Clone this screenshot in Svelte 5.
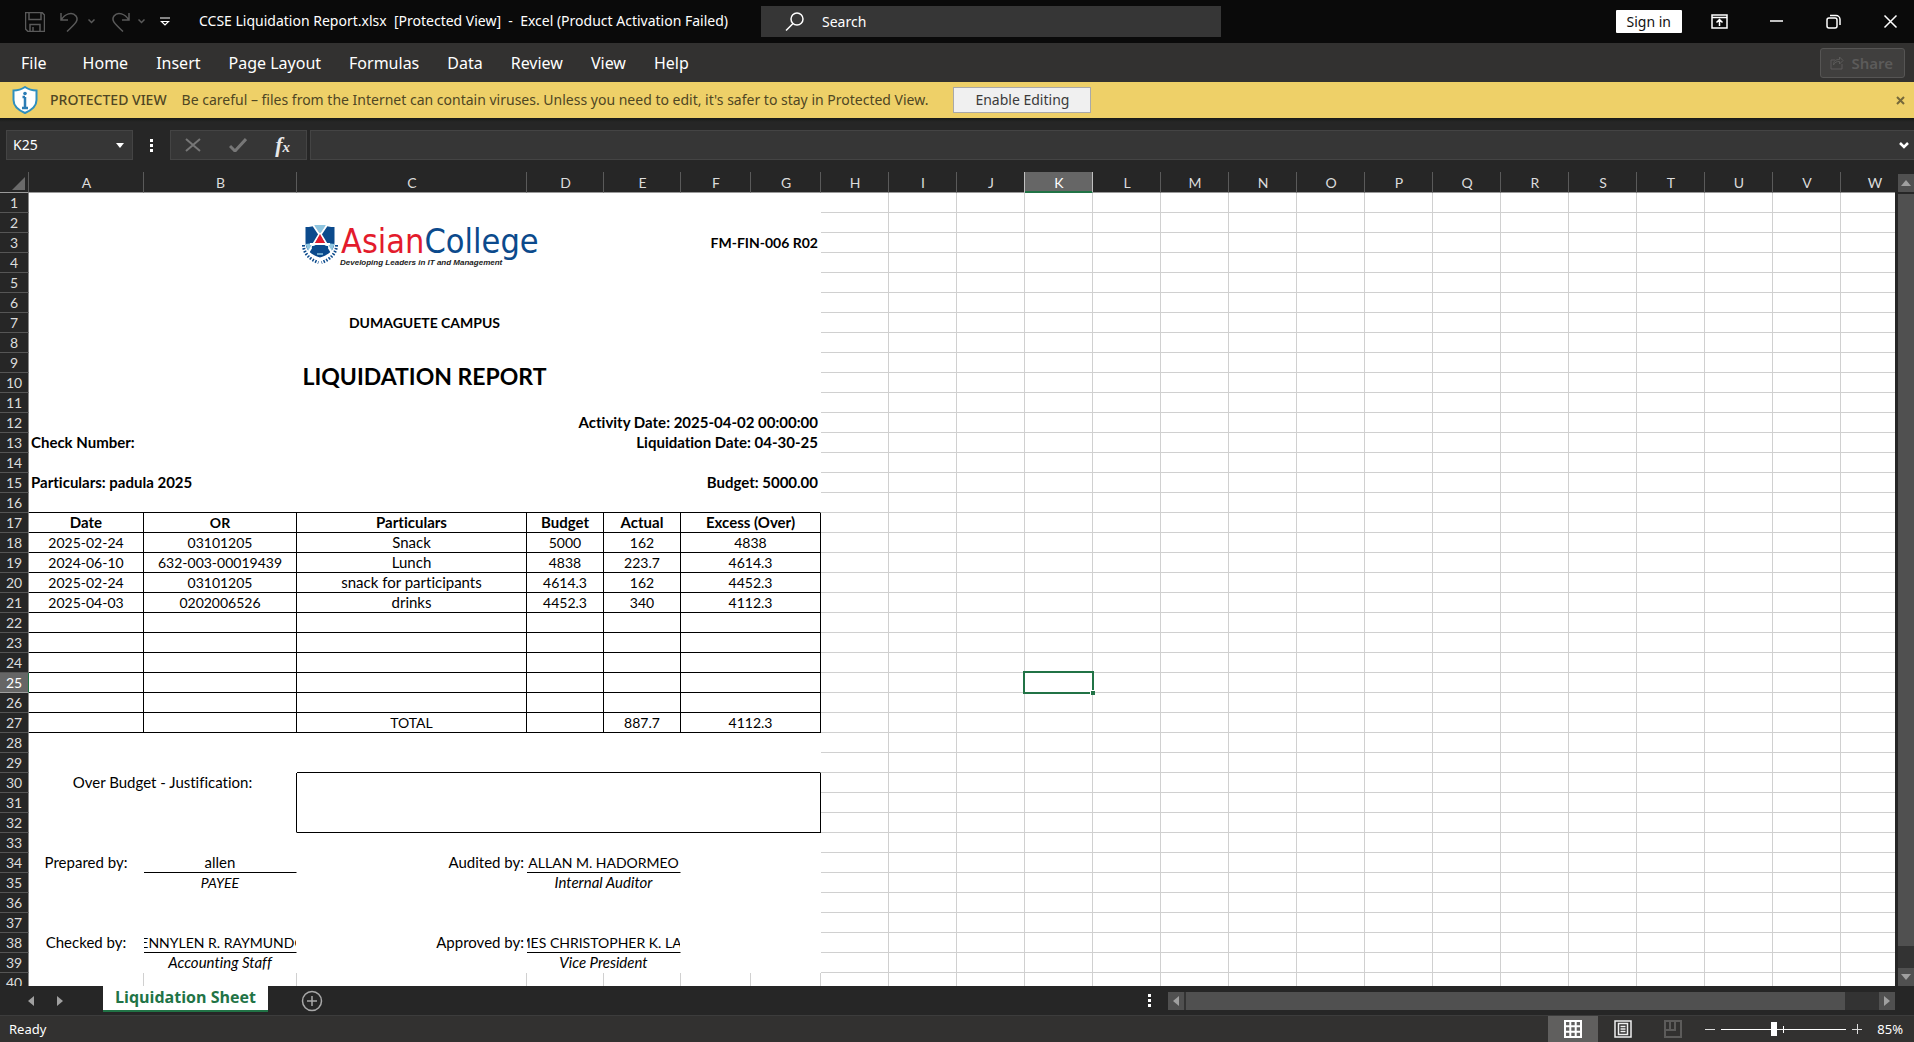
<script>
  const menus = ['Home', 'Insert', 'Page Layout', 'Formulas', 'Data', 'Review', 'View', 'Help'];
  const columns = 'ABCDEFGHIJKLMNOPQRSTUVW'.split('');
  const gridColumns = columns.slice(7);
  const tableHead = ['Date', 'OR', 'Particulars', 'Budget', 'Actual', 'Excess (Over)'];
  const entries = [
    ['2025-02-24', '03101205', 'Snack', '5000', '162', '4838'],
    ['2024-06-10', '632-003-00019439', 'Lunch', '4838', '223.7', '4614.3'],
    ['2025-02-24', '03101205', 'snack for participants', '4614.3', '162', '4452.3'],
    ['2025-04-03', '0202006526', 'drinks', '4452.3', '340', '4112.3'],
    ['', '', '', '', '', ''],
    ['', '', '', '', '', ''],
    ['', '', '', '', '', ''],
    ['', '', '', '', '', ''],
    ['', '', '', '', '', ''],
    ['', '', 'TOTAL', '', '887.7', '4112.3']
  ];

  // Wording in mixed case is set one size up from figures and capitals.
  const cell = (text = '', cls = '', span = 1, rows = 1) => ({
    text, span, rows, cls: /[a-z]/.test(text) ? cls + ' wording' : cls
  });
  const blank = () => [cell('', '', 7)];
  const boxed = (values, cls) => values.map((v, i) => cell(v, cls, i === 5 ? 2 : 1));
  const signers = (a, nameA, b, nameB) => [
    cell(a, 'center'), cell(nameA, 'center under clip'), cell(b, 'right'),
    cell(nameB, 'center under clip', 2), cell('', '', 2)
  ];
  const roles = (a, b) => [
    cell(), cell(a, 'center italic'), cell(), cell(b, 'center italic', 2), cell('', '', 2)
  ];

  // Cells of columns A to G for each numbered row; H onward is empty grid.
  const rows = [
    blank(),
    [cell('', '', 2), cell('', 'logo', 5)],
    [cell('FM-FIN-006 R02', 'bold right', 7)],
    blank(), blank(), blank(),
    [cell('DUMAGUETE CAMPUS', 'bold center', 7)],
    blank(),
    [cell('LIQUIDATION REPORT', 'heading', 7, 2)],
    [],
    blank(),
    [cell('Activity Date: 2025-04-02 00:00:00', 'bold right', 7)],
    [cell('Check Number:', 'bold', 2), cell('Liquidation Date: 04-30-25', 'bold right', 5)],
    blank(),
    [cell('Particulars: padula 2025', 'bold', 2), cell('Budget: 5000.00', 'bold right', 5)],
    [cell('', 'under', 7)],
    boxed(tableHead, 'box center bold'),
    ...entries.map((e) => boxed(e, 'box center')),
    blank(),
    [cell('', '', 2), cell('', 'under', 5)],
    [cell('Over Budget - Justification:', 'center top side', 2, 3), cell('', 'box', 5, 3)],
    [], [],
    blank(),
    signers('Prepared by:', 'allen', 'Audited by:', 'ALLAN M. HADORMEO'),
    roles('PAYEE', 'Internal Auditor'),
    blank(), blank(),
    signers('Checked by:', 'JENNYLEN R. RAYMUNDO', 'Approved by:', 'MES CHRISTOPHER K. LAY'),
    roles('Accounting Staff', 'Vice President'),
    Array.from({ length: 7 }, () => cell('', 'grid'))
  ];

  let zoom = $state(42);
</script>

<div class="app">
  <header class="titlebar">
    <div class="quick">
      <button aria-label="Save"><svg width="20" height="20" viewBox="0 0 20 20"><path d="M.5.5H17l2.500 2.500v16.500H3L.5 17zM4 .5v7h12v-7M5 19.500v-7h10v7M8 15v4" /></svg></button>
      <button class="pair" aria-label="Undo">
        <svg width="20" height="20" viewBox="0 0 20 20"><path d="M1 1v7h7M1 8C5 2 12-1 16 4c3 4 0 7-9 15.500" /></svg>
        <svg width="7" height="5" viewBox="0 0 7 5"><path d="M.5.5l3 3 3-3" /></svg>
      </button>
      <button class="pair" aria-label="Redo">
        <svg width="20" height="20" viewBox="0 0 20 20"><path d="M19 1v7h-7M19 8C15 2 8-1 4 4c-3 4 0 7 9 15.500" /></svg>
        <svg width="7" height="5" viewBox="0 0 7 5"><path d="M.5.5l3 3 3-3" /></svg>
      </button>
      <button class="lit" aria-label="Customize Quick Access Toolbar"><svg width="10" height="10" viewBox="0 0 10 10"><path d="M0 1h10M1.500 4.500L5 8l3.500-3.500z" /></svg></button>
      <h1>CCSE Liquidation Report.xlsx&nbsp; [Protected View]&nbsp; -&nbsp; Excel (Product Activation Failed)</h1>
    </div>
    <label class="search">
      <svg width="19" height="19" viewBox="0 0 19 19"><circle cx="12" cy="7" r="6" /><path d="M8 11.500L1 18.500" /></svg>
      <input type="search" aria-label="Search" placeholder="Search" />
    </label>
    <div class="window">
      <button class="signin">Sign in</button>
      <button aria-label="Ribbon Display Options"><svg width="17" height="15" viewBox="0 0 17 15"><path d="M1 1h15v13H1zM1 3.500h15M8.500 12V6M5.500 8.500l3-3 3 3" /></svg></button>
      <button aria-label="Minimize"><svg width="17" height="15" viewBox="0 0 17 15"><path d="M2 7h13" /></svg></button>
      <button aria-label="Restore"><svg width="17" height="15" viewBox="0 0 17 15"><rect x="2" y="4" width="10" height="10" rx="2" /><path d="M5 1.500h6a4 4 0 0 1 4 4V11" /></svg></button>
      <button aria-label="Close"><svg width="17" height="15" viewBox="0 0 17 15"><path d="M2.500 1.500l12 12M14.500 1.500l-12 12" /></svg></button>
    </div>
  </header>

  <nav class="menu">
    <button class="file">File</button>
    {#each menus as m}<button>{m}</button>{/each}
    <button class="share" disabled>
      <svg width="14" height="15" viewBox="0 0 14 15"><path d="M5 5H1v9h11V9M3.500 10c0-4 2-5.500 6-5.500V2l3.500 3.500L9.500 9V6.500c-3 0-4.500.5-6 3.500z" /></svg>
      Share
    </button>
  </nav>

  <section class="notice">
    <svg class="shield" width="26" height="28" viewBox="0 0 26 28"><path d="M13 1c4 2.800 7 3.500 11.500 3.500V14c0 6-4.500 10-11.500 13C6 24 1.500 20 1.500 14V4.500C6 4.500 9 3.800 13 1z" fill="#fff" stroke="#2f8fbf" stroke-width="2" /><path d="M13 11v11M10.500 11H13M10 22h6" stroke="#2b7cb5" stroke-width="2.500" fill="none" /><circle cx="13" cy="7.500" r="1.800" fill="#2b7cb5" /></svg>
    <strong>PROTECTED VIEW</strong>
    <span>Be careful – files from the Internet can contain viruses. Unless you need to edit, it's safer to stay in Protected View.</span>
    <button class="enable">Enable Editing</button>
    <button class="dismiss" aria-label="Close message"><svg width="9" height="9" viewBox="0 0 9 9"><path d="M1 1l7 7M8 1L1 8" /></svg></button>
  </section>

  <section class="formula">
    <div class="namebox">
      <input aria-label="Name Box" value="K25" />
      <button aria-label="Open names"><svg width="8" height="5" viewBox="0 0 8 5"><path d="M0 0h8L4 5z" fill="#fff" /></svg></button>
    </div>
    <span class="dots"><i></i><i></i><i></i></span>
    <div class="tools">
      <button aria-label="Cancel"><svg width="16" height="14" viewBox="0 0 16 14"><path d="M1 1l14 12M15 1L1 13" stroke="#777" stroke-width="2" /></svg></button>
      <button aria-label="Enter"><svg width="18" height="14" viewBox="0 0 18 14"><path d="M1 8l5 5L17 1" stroke="#777" stroke-width="3" fill="none" /></svg></button>
      <button class="fx" aria-label="Insert Function">f<sub>x</sub></button>
    </div>
    <div class="entry">
      <input aria-label="Formula Bar" />
      <button aria-label="Expand Formula Bar"><svg width="10" height="7" viewBox="0 0 10 7"><path d="M1 1l4 4 4-4" stroke="#fff" stroke-width="2.500" fill="none" /></svg></button>
    </div>
  </section>

  <main class="work">
    <div class="sheet">
      <table>
        <colgroup>
          <col class="w-head" /><col class="w-a" /><col class="w-b" /><col class="w-c" />
          <col class="w-d" /><col class="w-d" /><col class="w-f" /><col class="w-f" />
          {#each gridColumns as c (c)}<col class="w-grid" />{/each}
        </colgroup>
        <thead>
          <tr>
            <th class="corner"><svg width="13" height="13" viewBox="0 0 13 13"><path d="M13 0v13H0z" fill="#6b6b6b" /></svg></th>
            {#each columns as c}<th scope="col" class:active={c === 'K'}>{c}</th>{/each}
          </tr>
        </thead>
        <tbody>
          {#each rows as cells, r}
            <tr>
              <th scope="row" class:active={r === 24}>{r + 1}</th>
              {#each cells as c}
                <td class={c.cls} colspan={c.span} rowspan={c.rows}>
                  {#if c.cls === 'logo'}
                    <div class="brand">
                      <svg width="36" height="40" viewBox="0 0 36 40">
                        <path d="M3.500 3c5 0 8-.5 10-2h9c2 1.500 5 2 10 2v15c0 8-5 12.500-14.500 15.500C8.500 30.500 3.500 26 3.500 18z" fill="#0b4a8c" />
                        <path d="M12 1l6 9 6-9zM3.500 20l8-1 4 0-9 9zM32.500 20l-8-1-4 0 9 9z" fill="#8fc6e0" />
                        <path d="M11 1l8 12M25 1l-8 12M18 9L6 29M18 9l12 20M8 20h20" stroke="#fff" stroke-width="2" fill="none" />
                        <path d="M18 10l5 9H13z" fill="#e31b2c" />
                        <path d="M10 22h16c1 6-3 9-8 11-5-2-9-5-8-11z" fill="#0b4a8c" />
                        <path d="M15 30h6" stroke="#8fc6e0" stroke-width="1.500" />
                        <path d="M1.500 21c0 8 6 14.500 15 17.500M34.500 21c0 8-6 14.500-15 17.500" stroke="#0b4a8c" stroke-width="3" stroke-dasharray="1.500 1.500" fill="none" />
                      </svg>
                      <div>
                        <p class="name"><span>Asian</span>College</p>
                        <p class="tag">Developing Leaders in IT and Management</p>
                      </div>
                    </div>
                  {:else if c.cls.includes('clip')}
                    <div class="fit"><span>{c.text}</span></div>
                  {:else}{c.text}{/if}
                </td>
              {/each}
              {#each gridColumns as c}<td class="grid" class:selected={r === 24 && c === 'K'}></td>{/each}
            </tr>
          {/each}
        </tbody>
      </table>
    </div>
    <div class="vscroll">
      <button aria-label="Scroll up"><svg width="10" height="6" viewBox="0 0 10 6"><path d="M5 0l5 6H0z" /></svg></button>
      <div class="thumb"></div>
      <div class="rest"></div>
      <button aria-label="Scroll down"><svg width="10" height="6" viewBox="0 0 10 6"><path d="M5 6l5-6H0z" /></svg></button>
    </div>
  </main>

  <section class="tabs">
    <div class="tabstrip">
      <button aria-label="Previous sheet"><svg width="6" height="10" viewBox="0 0 6 10"><path d="M0 5l6-5v10z" /></svg></button>
      <button aria-label="Next sheet"><svg width="6" height="10" viewBox="0 0 6 10"><path d="M6 5L0 0v10z" /></svg></button>
      <button class="tab">Liquidation Sheet</button>
      <button class="add" aria-label="New sheet"><svg width="22" height="22" viewBox="0 0 22 22"><circle cx="11" cy="11" r="9.500" /><path d="M11 6v10M6 11h10" /></svg></button>
    </div>
    <span class="dots"><i></i><i></i><i></i></span>
    <div class="hscroll">
      <button aria-label="Scroll left"><svg width="6" height="10" viewBox="0 0 6 10"><path d="M0 5l6-5v10z" /></svg></button>
      <div class="thumb"></div>
      <div class="rest"></div>
      <button aria-label="Scroll right"><svg width="6" height="10" viewBox="0 0 6 10"><path d="M6 5L0 0v10z" /></svg></button>
    </div>
  </section>

  <footer class="status">
    <span class="ready">Ready</span>
    <button class="view on" aria-label="Normal"><svg width="18" height="18" viewBox="0 0 18 18"><path d="M1 1h16v16H1zM6.300 1v16M11.700 1v16M1 6.300h16M1 11.700h16" stroke="#fff" stroke-width="2" fill="none" /></svg></button>
    <button class="view" aria-label="Page Layout"><svg width="18" height="18" viewBox="0 0 18 18"><path d="M1 1h16v16H1zM4.500 3.500h9v11h-9zM6.500 6.500h5M6.500 9h5M6.500 11.500h5" stroke="#eee" stroke-width="1.500" fill="none" /></svg></button>
    <button class="view" aria-label="Page Break Preview"><svg width="18" height="18" viewBox="0 0 18 18"><path d="M1 1h16v16H1zM1 10h10V1M6 1v9" stroke="#5c5b5a" stroke-width="2" fill="none" /></svg></button>
    <div class="zoom">
      <button aria-label="Zoom out"><svg width="10" height="10" viewBox="0 0 10 10"><path d="M0 5.500h10" /></svg></button>
      <input type="range" min="0" max="100" bind:value={zoom} aria-label="Zoom" />
      <button aria-label="Zoom in"><svg width="10" height="10" viewBox="0 0 10 10"><path d="M0 5.500h10M5.500 0v10" /></svg></button>
    </div>
    <span class="percent">85%</span>
  </footer>
</div>

<style>
  :global(body) { background: #262626; }
  .app {
    display: flex; flex-direction: column; height: 100vh; overflow: hidden;
    background: #262626; color: #fff; font: 14px/20px "Noto Sans", "Open Sans", sans-serif;
  }
  button, input { font: inherit; color: inherit; background: none; border: 0; padding: 0; margin: 0; outline: 0; }
  button { display: flex; align-items: center; justify-content: center; white-space: nowrap; }
  svg { display: block; flex: none; }

  .titlebar {
    display: grid; grid-template-columns: minmax(0, 761fr) minmax(0, 460fr) minmax(0, 693fr);
    align-items: center; height: 43px; flex: none; background: #0a0a0a;
  }
  .titlebar svg { fill: none; stroke: #fff; stroke-width: 1.5; }
  .quick { display: flex; align-items: center; padding-left: 25px; gap: 15px; white-space: nowrap; }
  .quick svg { stroke: #5a5a5a; }
  .quick .lit svg { stroke: #fff; stroke-width: 1.2; }
  .pair { gap: 8px; }
  h1 { margin: 0 0 2px 14px; font-size: 14px; font-weight: 400; }
  .search { display: flex; align-items: center; gap: 18px; height: 31px; padding-left: 24px; background: #363636; }
  .search input { flex: 1; min-width: 0; }
  .search input::placeholder { color: #fff; opacity: 1; }
  .window { display: flex; justify-content: flex-end; align-items: center; gap: 40px; padding-right: 15px; }
  .signin { height: 23px; padding: 0 11px; margin-right: -11px; background: #fff; color: #111; border-radius: 1px; }

  .menu { display: flex; align-items: center; gap: 28px; height: 39px; flex: none; padding: 0 9px 0 21px; background: #323130; font-size: 16px; }
  .file { margin-right: 8px; }
  .share { margin-left: auto; gap: 7px; height: 30px; padding: 0 11px 0 9px; border: 1px solid #565554; border-radius: 3px; background: #403f3e; color: #5c5b5a; font-weight: 600; font-size: 15px; }
  .share svg { fill: none; stroke: #5c5b5a; }

  .notice { display: flex; align-items: center; height: 36px; flex: none; padding: 0 9px 0 12px; background: #eed068; color: #4f4623; white-space: nowrap; }
  .notice strong { margin: 0 15px 0 12px; font-weight: 500; }
  .enable { height: 26px; padding: 0 21px; margin-left: 25px; border: 1px solid #a9a9a9; background: #f0f0f0; color: #3b3b3b; }
  .dismiss { margin-left: auto; }
  .dismiss svg { stroke: #75683a; stroke-width: 2; }

  .formula { display: flex; align-items: center; height: 54px; flex: none; padding-left: 6px; background: linear-gradient(#181a17, #262626 4px); }
  .namebox, .tools, .entry { display: flex; align-items: center; box-sizing: border-box; height: 30px; border: 1px solid #444; background: #363636; }
  .namebox { width: 127px; padding: 0 8px 0 6px; }
  .namebox input, .entry input { flex: 1; min-width: 0; }
  .dots { display: flex; flex-direction: column; gap: 2px; margin: 0 17px; }
  .dots i { width: 3px; height: 3px; background: #fff; }
  .tools { width: 137px; justify-content: space-between; padding: 0 16px 0 14px; margin-right: 3px; }
  .fx { font: italic bold 22px/28px "Liberation Serif", serif; color: #e8e8e8; }
  .fx sub { font-size: 15px; line-height: 15px; vertical-align: 0; align-self: flex-end; padding-bottom: 4px; }
  .entry { flex: 1; padding-right: 5px; border-right: 0; }

  .work { display: flex; flex: 1; min-height: 0; }
  .sheet { flex: 1; min-width: 0; overflow: hidden; background: #fff; }
  table { width: 1909px; table-layout: fixed; border-collapse: separate; border-spacing: 0; font: 14px/19px Lato, "Open Sans", sans-serif; font-variant-ligatures: none; color: #000; }
  .w-head { width: 29px; }
  .w-a { width: 115px; }
  .w-b { width: 153px; }
  .w-c { width: 230px; }
  .w-d { width: 77px; }
  .w-f { width: 70px; }
  .w-grid { width: 68px; }
  th, td { box-sizing: border-box; height: 20px; padding: 0 2px; border: 0 solid transparent; border-width: 0 1px 1px 0; white-space: nowrap; text-align: left; }
  th { padding: 0; background: #262626; color: #dcdcdc; font-weight: 400; text-align: center; }
  thead th { height: 21px; padding: 2px 0 0 1px; border-bottom-color: #9a9a9a; border-right-color: #5a5a5a; line-height: 18px; }
  thead .active { position: relative; background: #666; border-color: #217346; border-right-color: #c0c0c0; color: #fff; box-shadow: inset 0 -1px #217346, -1px 0 #c0c0c0; }
  thead .corner { padding: 0; }
  .corner svg { margin: 3px 3px 0 auto; }
  tbody th { border-bottom-color: #555; border-right-color: #8a8a8a; }
  tbody .active { background: #666; color: #fff; border-bottom-color: #a0a0a0; border-right-color: #217346; }
  .grid { border-color: #d0d0d0; }
  .wording { font-size: 15px; }
  .bold { font-weight: 700; }
  .italic { font-style: italic; }
  .center { text-align: center; }
  .right { text-align: right; }
  .top { vertical-align: top; }
  .heading { font-size: 23px; line-height: 32px; font-weight: 700; text-align: center; vertical-align: bottom; }
  .under { border-bottom-color: #000; }
  .side { border-right-color: #000; }
  .box { border-color: #000; }
  .clip { padding: 0; }
  .fit { display: flex; justify-content: center; overflow: hidden; }
  .selected { position: relative; }
  .selected::before { content: ""; position: absolute; inset: -2px; border: 2px solid #217346; }
  .selected::after { content: ""; position: absolute; right: -3px; bottom: -3px; width: 4px; height: 4px; border: 1px solid #fff; background: #217346; border-width: 1px 0 0 1px; }

  .logo { position: relative; }
  .brand { position: absolute; left: 5px; top: 11px; display: flex; gap: 2px; }
  .brand p { margin: 0; }
  .name { padding-left: 1px; font: 34px/35px "DejaVu Sans Condensed", "DejaVu Sans", sans-serif; font-stretch: condensed; color: #0b4a8c; }
  .name span { color: #e31b2c; }
  .tag { font: italic bold 8px/8px "Liberation Sans", sans-serif; color: #222; }

  .vscroll { display: flex; flex-direction: column; width: 16px; padding: 2px 0 0 3px; background: #262626; }
  .vscroll button, .hscroll button { width: 16px; height: 18px; flex: none; background: #505050; }
  .vscroll svg, .hscroll svg, .tabstrip svg { fill: #a0a0a0; }
  .vscroll .thumb { flex: 753; margin-top: 2px; background: #505050; }
  .vscroll .rest { flex: 22; background: #333; }

  .tabs { display: grid; grid-template-columns: minmax(0, 1132fr) auto minmax(0, 727fr); height: 30px; flex: none; box-sizing: border-box; padding-right: 19px; border-bottom: 1px solid #3c3c3c; align-items: center; }
  .tabstrip { display: flex; align-items: flex-start; height: 29px; padding-left: 28px; }
  .tabstrip button { height: 29px; margin-right: 23px; }
  .tabstrip .tab { box-sizing: border-box; height: 26px; margin: 0 33px 0 17px; padding: 0 12px 2px; background: #fff; border-bottom: 2px solid #217346; color: #217346; font-size: 16px; font-weight: 700; font-family: "Open Sans", "Noto Sans", sans-serif; }
  .tabstrip .add svg { fill: none; stroke: #a8a8a8; stroke-width: 1.5; }
  .hscroll { display: flex; height: 18px; background: #333; }
  .hscroll .thumb { flex: 656; margin-left: 2px; background: #505050; }
  .hscroll .rest { flex: 34; }

  .status { display: flex; align-items: center; height: 26px; flex: none; padding: 0 11px 0 9px; background: #323130; font-size: 13px; }
  .ready { flex: 1; }
  .view { width: 50px; height: 26px; }
  .on { background: #605f5e; }
  .zoom { display: flex; align-items: center; gap: 6px; margin: 0 15px 0 7px; }
  .zoom svg { stroke: #ddd; }
  .zoom input {
    appearance: none; width: 125px; height: 14px;
    background: linear-gradient(#fff, #fff) 62px 50% / 1px 7px no-repeat, linear-gradient(#fff, #fff) 0 50% / 100% 1px no-repeat;
  }
  .zoom input::-webkit-slider-thumb { appearance: none; width: 6px; height: 14px; background: #fff; }
</style>
